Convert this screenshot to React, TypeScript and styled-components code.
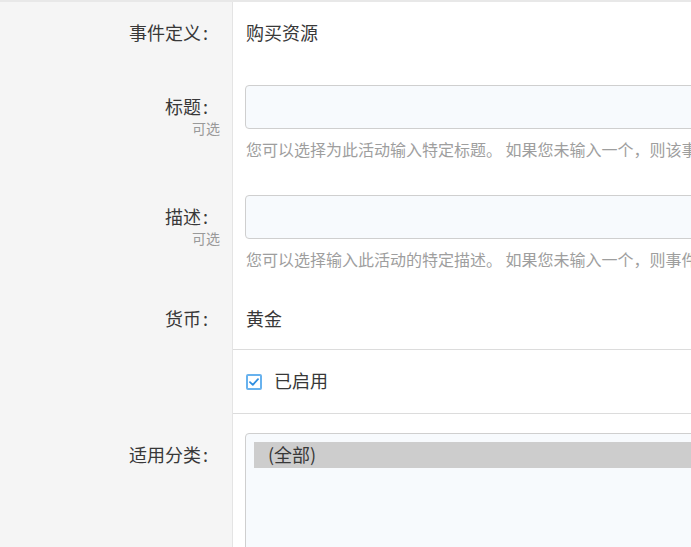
import React from "react";
import styled, { createGlobalStyle } from "styled-components";

const GlobalStyle = createGlobalStyle`
  html, body {
    margin: 0;
    padding: 0;
    background: #fff;
    overflow: hidden;
  }
  body {
    font-family: "Noto Sans CJK SC", "Noto Sans", sans-serif;
    color: #333;
  }
`;

const Page = styled.div`
  width: 1200px;
  border-top: 2px solid #e8e8e8;
`;

const Row = styled.div`
  display: grid;
  grid-template-columns: 233px 1fr;
`;

const LabelCell = styled.div<{ $top: number }>`
  box-sizing: border-box;
  background: #f5f5f5;
  border-right: 1px solid #e4e4e4;
  padding: ${(p) => p.$top}px 12px 0 0;
  display: flex;
  flex-direction: column;
  align-items: flex-end;
`;

const LabelText = styled.div`
  font-size: 18px;
  line-height: 26px;
  color: #383838;
  margin-right: 12px;
  white-space: nowrap;
`;

const Colon = styled.span`
  margin-left: 2px;
`;

const OptionalNote = styled.div`
  font-size: 14px;
  line-height: 18px;
  color: #999;
`;

const ValueCell = styled.div<{ $top: number; $bottom: number; $divided?: boolean }>`
  padding: ${(p) => p.$top}px 12px ${(p) => p.$bottom}px 12px;
  border-top: ${(p) => (p.$divided ? "1px solid #dcdcdc" : "none")};
  border-bottom: ${(p) => (p.$divided ? "1px solid #dcdcdc" : "none")};
`;

const ValueText = styled.div`
  font-size: 18px;
  line-height: 26px;
  color: #383838;
  padding-left: 1px;
`;

const TextInput = styled.input`
  box-sizing: border-box;
  display: block;
  width: 100%;
  height: 44px;
  margin: 0;
  padding: 0 12px;
  border: 1px solid #cfcfcf;
  border-radius: 4px;
  background: #f7fafd;
  font-family: inherit;
  font-size: 18px;
  color: #333;
  outline: none;
`;

const HelpText = styled.div`
  margin-top: 8px;
  font-size: 16px;
  line-height: 24px;
  color: #9e9e9e;
  white-space: nowrap;
  padding-left: 1px;
`;

const CheckRow = styled.label`
  display: flex;
  align-items: center;
  gap: 12px;
  height: 25px;
  padding-left: 1px;
  font-size: 18px;
  line-height: 25px;
  color: #383838;
`;

const CheckLabel = styled.span`
  position: relative;
  top: -1px;
`;

const CheckBox = styled.span`
  box-sizing: border-box;
  width: 16px;
  height: 16px;
  border: 2px solid #68b2ee;
  border-radius: 2px;
  background: #fff;
  display: flex;
  align-items: center;
  justify-content: center;
`;

const ListBox = styled.div`
  box-sizing: border-box;
  height: 160px;
  padding: 8px;
  border: 1px solid #cfcfcf;
  border-radius: 4px;
  background: #f7fafd;
`;

const ListOption = styled.div<{ $selected?: boolean }>`
  height: 26px;
  line-height: 24px;
  padding-left: 14px;
  font-size: 18px;
  color: #383838;
  background: ${(p) => (p.$selected ? "#cdcdcd" : "transparent")};
`;

const Label: React.FC<{ text: string }> = ({ text }) => (
  <LabelText>
    {text}
    <Colon>:</Colon>
  </LabelText>
);

export default function App() {
  return (
    <>
      <GlobalStyle />
      <Page>
        <Row>
          <LabelCell $top={17}>
            <Label text="事件定义" />
          </LabelCell>
          <ValueCell $top={17} $bottom={21}>
            <ValueText>购买资源</ValueText>
          </ValueCell>
        </Row>

        <Row>
          <LabelCell $top={27}>
            <Label text="标题" />
            <OptionalNote>可选</OptionalNote>
          </LabelCell>
          <ValueCell $top={19} $bottom={15}>
            <TextInput type="text" />
            <HelpText>
              您可以选择为此活动输入特定标题。 如果您未输入一个，则该事件定义的名称将用作标题。
            </HelpText>
          </ValueCell>
        </Row>

        <Row>
          <LabelCell $top={27}>
            <Label text="描述" />
            <OptionalNote>可选</OptionalNote>
          </LabelCell>
          <ValueCell $top={19} $bottom={15}>
            <TextInput type="text" />
            <HelpText>
              您可以选择输入此活动的特定描述。 如果您未输入一个，则事件定义的描述将被使用。
            </HelpText>
          </ValueCell>
        </Row>

        <Row>
          <LabelCell $top={19}>
            <Label text="货币" />
          </LabelCell>
          <ValueCell $top={19} $bottom={18}>
            <ValueText>黄金</ValueText>
          </ValueCell>
        </Row>

        <Row>
          <LabelCell $top={19} />
          <ValueCell $top={19} $bottom={19} $divided>
            <CheckRow>
              <CheckBox>
                <svg width="10" height="8" viewBox="0 0 10 8">
                  <path
                    d="M1 4.2 L3.8 6.8 L9 1.2"
                    fill="none"
                    stroke="#2f8ee0"
                    strokeWidth="1.8"
                    strokeLinecap="round"
                    strokeLinejoin="round"
                  />
                </svg>
              </CheckBox>
              <CheckLabel>已启用</CheckLabel>
            </CheckRow>
          </ValueCell>
        </Row>

        <Row>
          <LabelCell $top={27}>
            <Label text="适用分类" />
          </LabelCell>
          <ValueCell $top={19} $bottom={40}>
            <ListBox>
              <ListOption $selected>(全部)</ListOption>
            </ListBox>
          </ValueCell>
        </Row>
      </Page>
    </>
  );
}
